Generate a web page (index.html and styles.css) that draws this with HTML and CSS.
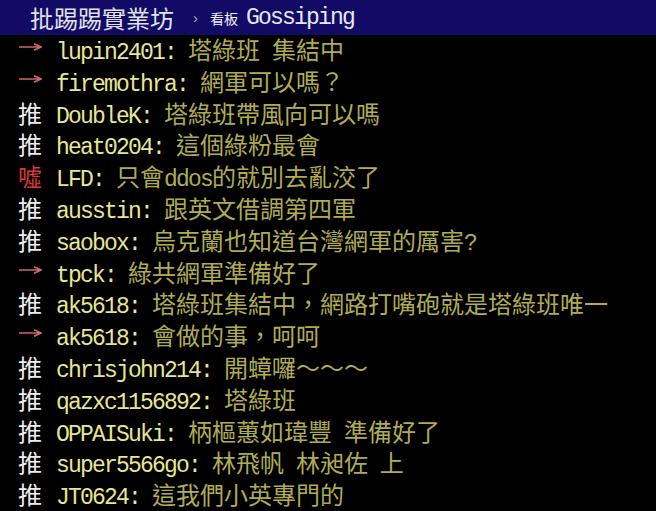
FILE: index.html
```html
<!DOCTYPE html>
<html lang="zh-Hant">
<head>
<meta charset="utf-8">
<title>批踢踢實業坊 › 看板 Gossiping</title>
<link rel="stylesheet" href="styles.css">
</head>
<body>
<header class="topbar">
  <span class="site">批踢踢實業坊</span>
  <span class="sep">›</span>
  <span class="board-label">看板</span>
  <span class="board en">Gossiping</span>
</header>
<main class="comments">
  <div class="row"><span class="tag arrow"><svg viewBox="0 0 24 10" width="24" height="10"><path d="M1 5H23M16 1.8L23 5L16 8.2"/></svg></span><span class="user en">lupin2401: </span><span class="text">塔綠班 集結中</span></div>
  <div class="row"><span class="tag arrow"><svg viewBox="0 0 24 10" width="24" height="10"><path d="M1 5H23M16 1.8L23 5L16 8.2"/></svg></span><span class="user en">firemothra: </span><span class="text">網軍可以嗎？</span></div>
  <div class="row"><span class="tag push">推</span><span class="user en">DoubleK: </span><span class="text">塔綠班帶風向可以嗎</span></div>
  <div class="row"><span class="tag push">推</span><span class="user en">heat0204: </span><span class="text">這個綠粉最會</span></div>
  <div class="row"><span class="tag boo">噓</span><span class="user en">LFD: </span><span class="text">只會<span class="en">ddos</span>的就別去亂洨了</span></div>
  <div class="row"><span class="tag push">推</span><span class="user en">ausstin: </span><span class="text">跟英文借調第四軍</span></div>
  <div class="row"><span class="tag push">推</span><span class="user en">saobox: </span><span class="text">烏克蘭也知道台灣網軍的厲害<span class="en">?</span></span></div>
  <div class="row"><span class="tag arrow"><svg viewBox="0 0 24 10" width="24" height="10"><path d="M1 5H23M16 1.8L23 5L16 8.2"/></svg></span><span class="user en">tpck: </span><span class="text">綠共網軍準備好了</span></div>
  <div class="row"><span class="tag push">推</span><span class="user en">ak5618: </span><span class="text">塔綠班集結中，網路打嘴砲就是塔綠班唯一</span></div>
  <div class="row"><span class="tag arrow"><svg viewBox="0 0 24 10" width="24" height="10"><path d="M1 5H23M16 1.8L23 5L16 8.2"/></svg></span><span class="user en">ak5618: </span><span class="text">會做的事，呵呵</span></div>
  <div class="row"><span class="tag push">推</span><span class="user en">chrisjohn214: </span><span class="text">開蟑囉～～～</span></div>
  <div class="row"><span class="tag push">推</span><span class="user en">qazxc1156892: </span><span class="text">塔綠班</span></div>
  <div class="row"><span class="tag push">推</span><span class="user en">OPPAISuki: </span><span class="text">柄樞蕙如瑋豐 準備好了</span></div>
  <div class="row"><span class="tag push">推</span><span class="user en">super5566go: </span><span class="text">林飛帆 林昶佐 上</span></div>
  <div class="row"><span class="tag push">推</span><span class="user en">JT0624: </span><span class="text">這我們小英專門的</span></div>
</main>
</body>
</html>
```
FILE: styles.css
```css
html, body {
  margin: 0;
  padding: 0;
  background: #000;
}
body {
  font-family: "Noto Sans CJK TC", "Noto Sans CJK SC", sans-serif;
  font-size: 24px;
  color: #b0ac54;
  overflow: hidden;
}
.en {
  font-family: "Liberation Mono", "Noto Sans CJK TC", monospace;
  font-size: 23px;
  letter-spacing: -1.8px;
  word-spacing: 0;
}
.topbar {
  display: flex;
  align-items: center;
  height: 35px;
  padding-left: 30px;
  background: #110b66;
  color: #e6e6ee;
  white-space: nowrap;
}
.site {
  font-size: 24px;
  line-height: 35px;
  color: #e2e2e8;
}
.sep {
  margin-left: 19px;
  font-family: "Liberation Sans", sans-serif;
  font-size: 15px;
  color: #a8a8c0;
}
.board-label {
  margin-left: 12px;
  font-size: 14px;
  color: #f0f0f4;
}
.board {
  margin-left: 8px;
  color: #e8e8f4;
}
.comments {
  display: block;
}
.row {
  height: 31.8px;
  line-height: 28px;
  padding-left: 18px;
  white-space: pre;
}
.tag {
  display: inline-block;
  width: 24px;
  margin-right: 14px;
  text-align: center;
}
.push {
  color: #eeeeee;
}
.boo {
  color: #d63838;
}
.arrow svg {
  display: inline-block;
  vertical-align: 7px;
  fill: none;
  stroke: #cc6a6a;
  stroke-width: 1.6;
}
.user {
  color: #e6e694;
}
.text {
  color: #b0ac54;
  word-spacing: 6.5px;
}
```
